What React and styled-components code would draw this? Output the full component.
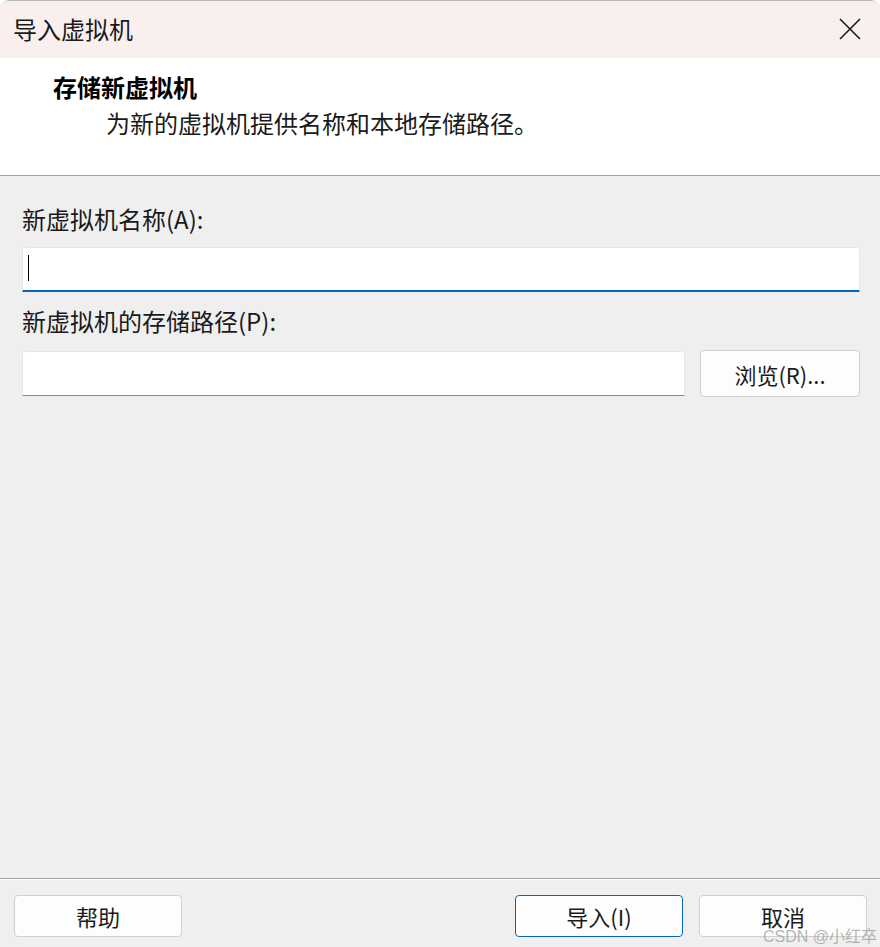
import React from "react";
import styled, { createGlobalStyle } from "styled-components";

const GlobalStyle = createGlobalStyle`
  html, body {
    margin: 0;
    padding: 0;
    background: #ffffff;
  }
  body {
    font-family: "Noto Sans CJK SC", "Noto Sans", sans-serif;
  }
`;

const Window = styled.div`
  width: 880px;
  height: 947px;
  box-sizing: border-box;
  display: flex;
  flex-direction: column;
  border-top: 1px solid #b9b9b9;
  border-radius: 9px 9px 0 0;
  overflow: hidden;
  background: #efefef;
`;

const TitleBar = styled.div`
  height: 57px;
  flex: none;
  display: flex;
  align-items: center;
  justify-content: space-between;
  background: #f8efee;
  padding: 0 18px 0 13px;
  box-sizing: border-box;
`;

const TitleText = styled.div`
  font-size: 24px;
  color: #1a1a1a;
  line-height: 30px;
  margin-top: -1px;
`;

const CloseButton = styled.div`
  width: 24px;
  height: 24px;
  display: flex;
  align-items: center;
  justify-content: center;
  margin-top: -1px;
`;

const Header = styled.div`
  height: 118px;
  flex: none;
  background: #ffffff;
  border-bottom: 1px solid #a0a0a0;
  padding: 14px 0 0 53px;
  box-sizing: border-box;
`;

const HeaderTitle = styled.div`
  font-size: 24px;
  font-weight: 700;
  line-height: 30px;
  color: #000;
`;

const HeaderSub = styled.div`
  font-size: 24px;
  line-height: 30px;
  margin: 6px 0 0 53px;
  color: #1a1a1a;
`;

const Body = styled.div`
  flex: 1;
  padding: 28px 20px 0 22px;
  display: flex;
  flex-direction: column;
`;

const Label = styled.div`
  font-size: 24px;
  line-height: 30px;
  color: #1a1a1a;
  margin-top: ${(p) => p.$gap || 0}px;
`;

const Row = styled.div`
  display: flex;
  gap: 15px;
  align-items: center;
  margin-top: ${(p) => p.$gap || 14}px;
`;

const Input = styled.div`
  height: 45px;
  box-sizing: border-box;
  background: #ffffff;
  border: 1px solid #e6e6e6;
  border-bottom: ${(p) => (p.$focused ? "2px solid #0067c0" : "1px solid #8a8a8a")};
  border-radius: 3px 3px 0 0;
  flex: 1;
  display: flex;
  align-items: center;
  padding-left: 5px;
`;

const Caret = styled.div`
  width: 1px;
  height: 26px;
  background: #000;
  margin-top: -2px;
`;

const Button = styled.button`
  width: ${(p) => p.$w || 168}px;
  height: ${(p) => p.$h || 42}px;
  flex: none;
  box-sizing: border-box;
  background: #fdfdfd;
  border: 1px solid ${(p) => (p.$primary ? "#0067c0" : "#d0d0d0")};
  border-radius: 4px;
  font-family: "Noto Sans CJK SC", "Noto Sans", sans-serif;
  font-size: 22px;
  color: #1a1a1a;
  padding: 0;
  display: flex;
  align-items: center;
  justify-content: center;
`;

const Footer = styled.div`
  height: 69px;
  flex: none;
  border-top: 1px solid #a0a0a0;
  box-shadow: inset 0 1px 0 #ffffff;
  padding: 16px 13px 0 14px;
  box-sizing: border-box;
  display: flex;
  position: relative;
`;

const Spacer = styled.div`
  flex: 1;
`;

const RightButtons = styled.div`
  display: flex;
  gap: 16px;
`;

const Watermark = styled.div`
  position: absolute;
  right: 3px;
  bottom: 0;
  font-size: 16px;
  line-height: 20px;
  color: rgba(150, 150, 150, 0.7);
  font-family: "Liberation Sans", "Noto Sans CJK SC", sans-serif;
  pointer-events: none;
`;

export default function App() {
  return (
    <>
      <GlobalStyle />
      <Window>
        <TitleBar>
          <TitleText>导入虚拟机</TitleText>
          <CloseButton>
            <svg width="22" height="22" viewBox="0 0 22 22">
              <path d="M1 1 L21 21 M21 1 L1 21" stroke="#1a1a1a" strokeWidth="1.6" fill="none" />
            </svg>
          </CloseButton>
        </TitleBar>
        <Header>
          <HeaderTitle>存储新虚拟机</HeaderTitle>
          <HeaderSub>为新的虚拟机提供名称和本地存储路径。</HeaderSub>
        </Header>
        <Body>
          <Label>新虚拟机名称(A):</Label>
          <Row $gap={13}>
            <Input $focused>
              <Caret />
            </Input>
          </Row>
          <Label $gap={14}>新虚拟机的存储路径(P):</Label>
          <Row $gap={14}>
            <Input />
            <Button $w={160} $h={47}>浏览(R)...</Button>
          </Row>
        </Body>
        <Footer>
          <Button>帮助</Button>
          <Spacer />
          <RightButtons>
            <Button $primary>导入(I)</Button>
            <Button>取消</Button>
          </RightButtons>
          <Watermark>CSDN @小红卒</Watermark>
        </Footer>
      </Window>
    </>
  );
}
